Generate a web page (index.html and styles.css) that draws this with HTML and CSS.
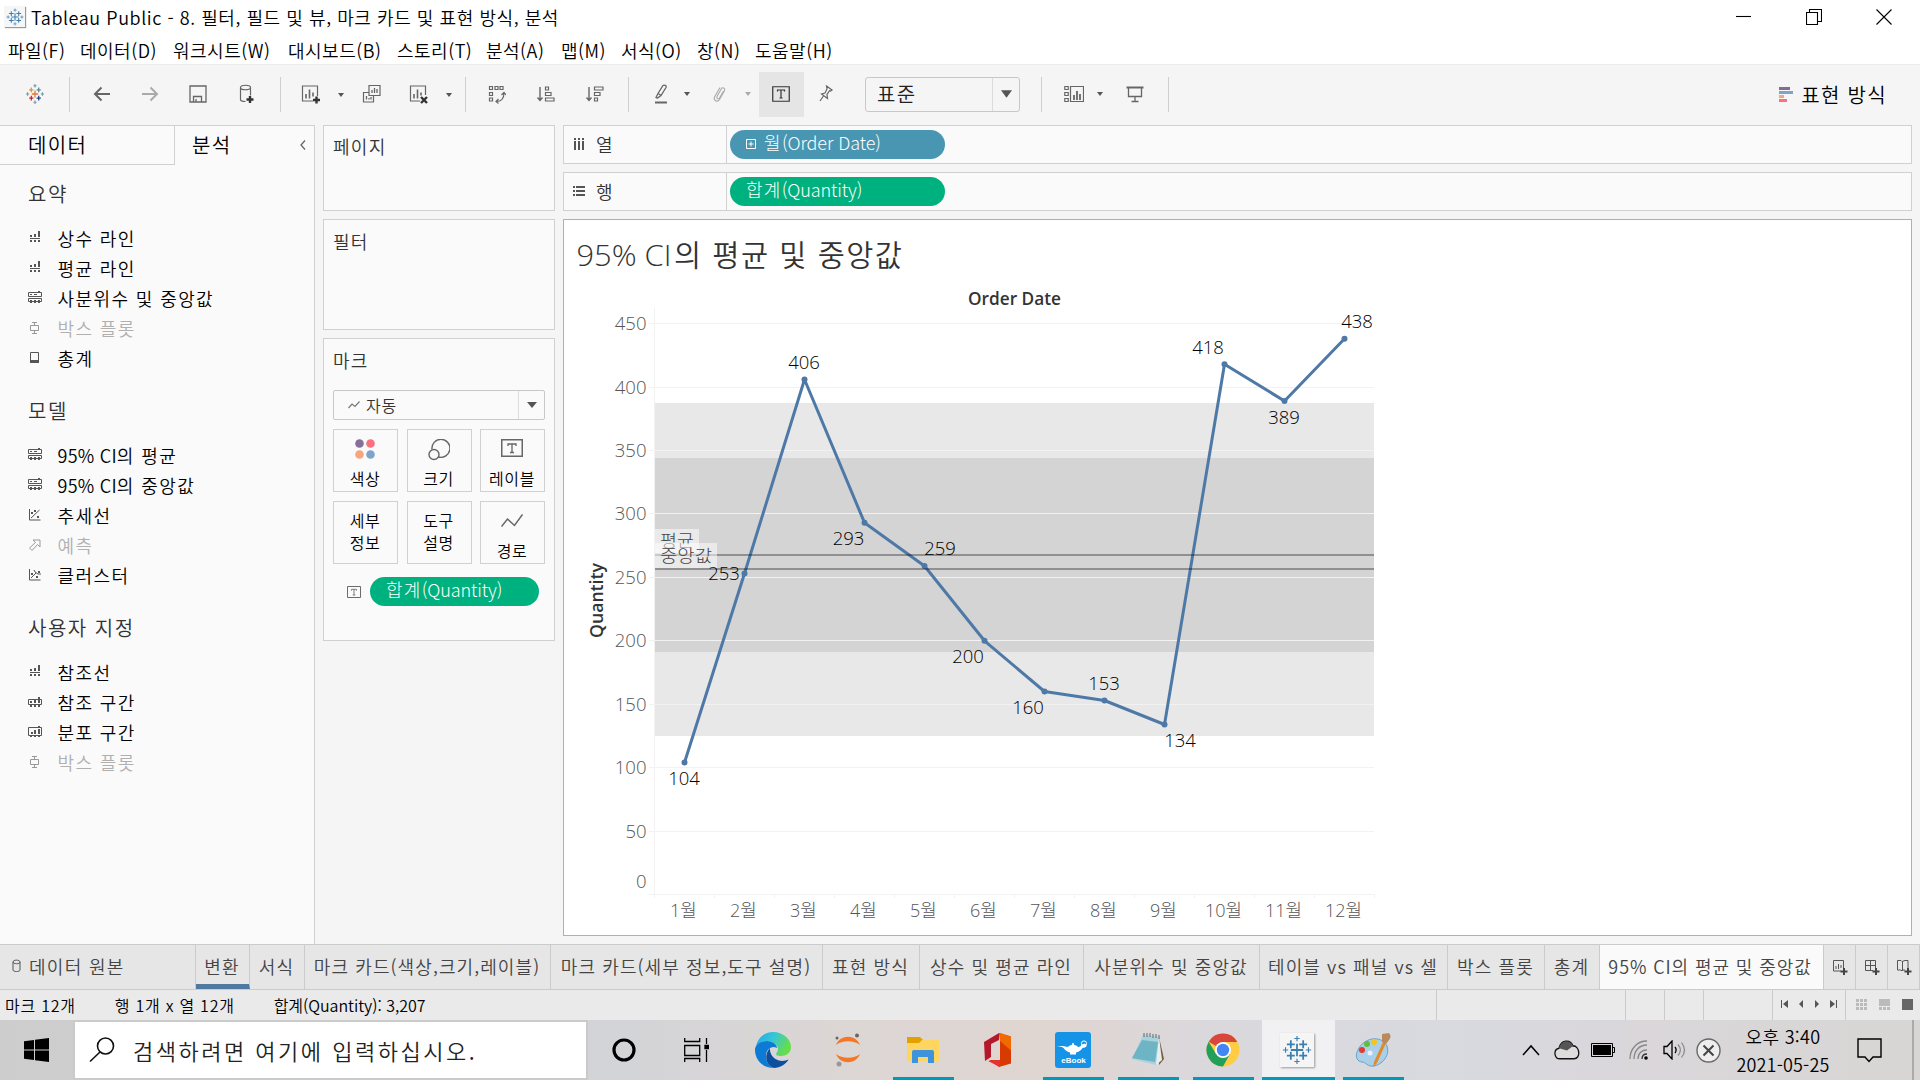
FILE: index.html
```html
<!DOCTYPE html>
<html lang="ko">
<head>
<meta charset="utf-8">
<title>Tableau Public - 8. 필터, 필드 및 뷰, 마크 카드 및 표현 방식, 분석</title>
<link rel="stylesheet" href="styles.css">
</head>
<body>
<svg class="defs" width="0" height="0">
  <symbol id="tab-mark" viewBox="0 0 34 34"><path d="M17 10v14M10 17h14M10 6v9M5.5 10.500h9M24 6v9M19.500 10.500h9M10 19v9M5.500 23.500h9M24 19v9M19.500 23.500h9" stroke-width="2"/><path d="M17 1v6M14 4h6M17 27v6M14 30h6M4 14v6M1 17h6M30 14v6M27 17h6" stroke-width="1.300"/></symbol>
  <symbol id="caret" viewBox="0 0 6 4"><path d="M0 0h6L3 4z"/></symbol>
  <symbol id="i-line" viewBox="0 0 14 14"><path d="M2 4h2v2H2zM6 3h2v3H6zM10 0h2v6h-2zM2 7h10v1H2zM2 9h2v2H2zM6 9h2v2H6zM10 9h2v2h-2z"/></symbol>
  <symbol id="i-quart" viewBox="0 0 14 14"><path d="M.5 5.500v-4h13v4zM.5 10.500v-3h13v3z" fill="none" stroke="currentColor"/><path d="M2 3h2v1H2zM6 3h3v1H6zM10 0h2v2h-2zM2 9h2v3H2zM6 9h2v3H6zM10 9h2v3h-2z"/></symbol>
  <symbol id="i-box" viewBox="0 0 14 14"><path d="M4 1.500h5M6.500 1.500v3M2.500 4.500h8v5h-8zM6.500 9.500v3M4 12.500h5" fill="none" stroke="currentColor"/></symbol>
  <symbol id="i-total" viewBox="0 0 14 14"><path d="M2.500 1.500h8v10h-8z" fill="none" stroke="currentColor"/><path d="M2 9h9v3H2z"/></symbol>
  <symbol id="i-trend" viewBox="0 0 14 14"><path d="M1.500 1v11h11M3 10l8.500-8" fill="none" stroke="currentColor"/><path d="M3 4h2v2H3zM6 2h2v2H6zM9 8h2v2H9z"/></symbol>
  <symbol id="i-cluster" viewBox="0 0 14 14"><path d="M1.500 1v11h11M3 10l5-5M6 2l1 2 3 2h3" fill="none" stroke="currentColor"/><path d="M3 5h2v2H3zM10 3h2v2h-2zM8 8h2v2H8z"/></symbol>
  <symbol id="i-fore" viewBox="0 0 14 14"><path d="M5 2h7v7l-2.500-2.500-5.500 6L1.500 10l6-5.500z" fill="none" stroke="currentColor"/></symbol>
  <symbol id="i-band" viewBox="0 0 14 14"><path d="M.5 4.500h13v5H.5z" fill="none" stroke="currentColor"/><path d="M2 6h2v2H2zM6 5h2v3H6zM10 2h2v6h-2zM2 9h2v3H2zM6 9h2v3H6zM10 9h2v3h-2z"/></symbol>
  <symbol id="i-dist" viewBox="0 0 14 14"><path d="M.5 2.500h13v8H.5z" fill="none" stroke="currentColor"/><path d="M3 7h2v2H3zM6 5h2v4H6zM10 4h2v5h-2zM10 1h2v2h-2zM2 10h2v2H2zM6 10h2v2H6zM10 10h2v2h-2z"/></symbol>
  <symbol id="i-text" viewBox="0 0 22 18"><path d="M.75.75h20.500v16.500H.75z" fill="none" stroke="currentColor" stroke-width="1.500"/><path d="M7 7V5h8v2M11 5v8.500M9 13.500h4" fill="none" stroke="currentColor" stroke-width="1.300"/></symbol>
</svg>

<header class="titlebar">
  <span class="app-icon"><svg width="18" height="18" stroke="#3b7fb0"><use href="#tab-mark"/></svg></span>
  <span class="title">Tableau Public - 8. 필터, 필드 및 뷰, 마크 카드 및 표현 방식, 분석</span>
  <div class="win">
    <svg width="16" height="16" viewBox="0 0 16 16"><path d="M0 7.500h15"/></svg>
    <svg width="16" height="16" viewBox="0 0 16 16"><path d="M.5 3.500h11v12H.5zM3.500 3V.5h12v12H12"/></svg>
    <svg width="16" height="16" viewBox="0 0 16 16"><path d="M.5.5l15 15M15.500.5l-15 15"/></svg>
  </div>
</header>
<nav class="menu"><span>파일(F)</span><span>데이터(D)</span><span>워크시트(W)</span><span>대시보드(B)</span><span>스토리(T)</span><span>분석(A)</span><span>맵(M)</span><span>서식(O)</span><span>창(N)</span><span>도움말(H)</span></nav>

<div class="toolbar">
  <div class="group g-logo"><svg width="18" height="20" viewBox="0 0 34 34" fill="none" stroke-width="2.400" preserveAspectRatio="none"><path d="M17 11v12M11 17h12" stroke="#e8762d"/><path d="M10 6v8M6 10h8" stroke="#e8912d"/><path d="M24 6v8M20 10h8" stroke="#5b879b"/><path d="M10 20v8M6 24h8" stroke="#c72035"/><path d="M24 20v8M20 24h8" stroke="#1f447e"/><path d="M17 0v6M14 3h6M17 28v6M14 31h6M3 14v6M0 17h6M31 14v6M28 17h6" stroke="#7099a6" stroke-width="2"/></svg></div>
  <div class="group g-hist">
    <svg width="18" height="16" viewBox="0 0 18 16"><path d="M17 8H2M8.500 1.500L2 8l6.500 6.500" stroke-width="2"/></svg>
    <svg class="dim" width="18" height="16" viewBox="0 0 18 16"><path d="M1 8h15M9.500 1.500L16 8l-6.500 6.500" stroke-width="2"/></svg>
    <svg width="18" height="18" viewBox="0 0 18 18"><path d="M1 1h16v16H1zM4.500 17v-5.500h8V17M7 17v-3" stroke-width="1.300"/></svg>
    <svg width="18" height="20" viewBox="0 0 18 20"><path d="M3.500 3.500v12c0 1.500 2 2 5 2M3.500 3.500c0-3 10-3 10 0s-10 3-10 0M13.500 3.500v8" stroke-width="1.200"/><path d="M13 12v7M9.500 15.500h7" class="bold"/></svg>
  </div>
  <div class="group g-sheet">
    <svg width="20" height="20" viewBox="0 0 20 20"><path d="M12 17H1.500V2h15v10" stroke-width="1.200"/><path d="M5 10v4.500M8.500 5.500v9M12 8.500v4" stroke-width="1.600"/><path d="M15.500 12.500v7M12 16h7" class="bold"/></svg><svg class="car" width="6" height="4"><use href="#caret"/></svg>
    <svg width="20" height="20" viewBox="0 0 20 20"><path d="M7 1.500h11v10H7zM7 8.500H1.500V18h10v-6" stroke-width="1.200"/><path d="M10 6v3M12.500 4v5M15 5v4M4.500 12v3.500M7 14v1.500M9 13v2.500" stroke-width="1.300"/></svg>
    <svg width="20" height="20" viewBox="0 0 20 20"><path d="M11 17H1.500V2h15v9" stroke-width="1.200"/><path d="M5 10v4.500M8.500 5.500v9M12 8.500v3" stroke-width="1.600"/><path d="M12 13l6 6M18 13l-6 6" class="bold"/></svg><svg class="car" width="6" height="4"><use href="#caret"/></svg>
  </div>
  <div class="group g-sort">
    <svg width="18" height="20" viewBox="0 0 18 20"><path d="M1.500 2.500h3v3h-3zM7 2.500h3v3H7zM12 2.500h3v3h-3zM1.500 8.500h3v3h-3zM1.500 14h3v3h-3zM8.500 17.500c5 0 7.500-3.500 7.500-8.500M13.500 11l2.500-2.500 2 2.500M10.500 15l-2.500 2.500 2.500 2" stroke-width="1.200"/></svg>
    <svg width="18" height="18" viewBox="0 0 18 18"><path d="M3 2v13M.5 12.500L3 15.500l2.500-3" stroke-width="1.400"/><path d="M8.500 2h3v3h-3zM8.500 7.500h5.500v3H8.500zM8.500 13h8.500v3H8.500z" stroke-width="1.200"/></svg>
    <svg width="18" height="18" viewBox="0 0 18 18"><path d="M3 2v13M.5 12.500L3 15.500l2.500-3" stroke-width="1.400"/><path d="M8.500 2H17v3H8.500zM8.500 7.500H14v3H8.500zM8.500 13h3v3h-3z" stroke-width="1.200"/></svg>
  </div>
  <div class="group g-fmt">
    <svg width="20" height="20" viewBox="0 0 20 20"><path d="M5 14l-1-.5 2-4 5-8c1-1 4 0 3 2l-5 8-3.500 2.500zM6 9.500l3.500 2" stroke-width="1.300"/><path d="M3 18.500h12" stroke-width="2"/></svg><svg class="car" width="6" height="4"><use href="#caret"/></svg>
    <svg class="dim clip" width="18" height="20" viewBox="0 0 18 20"><path d="M13.500 7l-4 7c-1 1.500-3.500.5-2.500-1.500l4.500-8c1-1.500 4-.5 3 2l-5 9c-1.500 3-6.500 1.500-5-2.500l5.500-9.500" stroke-width="1.100"/></svg><svg class="car dimf" width="6" height="4"><use href="#caret"/></svg>
    <span class="on"><svg width="18" height="16" viewBox="0 0 18 16"><path d="M.75.75h16.500v14.500H.75zM5.500 5.500V4h7v1.500M9 4v8M7.500 12h3" stroke-width="1.200"/></svg></span>
    <svg class="pin" width="16" height="18" viewBox="0 0 16 18"><path d="M8.500 1l5.500 4-1.500 1-1-.3L9 9.500l.5 4-6-4.500 3.500-1L9 4zM5.500 11L2 16" stroke-width="1.200"/></svg>
    <div class="fit"><span>표준</span><i><svg width="11" height="8"><use href="#caret"/></svg></i></div>
  </div>
  <div class="group g-show">
    <svg width="20" height="18" viewBox="0 0 20 18"><path d="M6.500 1.500h13v15h-13zM.8 1.500h3.400v3H.8zM.8 7.500h3.400v3H.8zM.8 13.500h3.400v3H.8z" stroke-width="1.200"/><path d="M10 10v5M13 6v9M16 9v6" stroke-width="1.800"/></svg><svg class="car" width="6" height="4"><use href="#caret"/></svg>
    <svg width="18" height="18" viewBox="0 0 18 18"><path d="M.5 2.500h17" stroke-width="2"/><path d="M2.500 3v8.500h13V3M9 11.500v5M5.500 16.500h7" stroke-width="1.300"/></svg>
  </div>
  <div class="showme"><svg width="14" height="15"><path d="M0 0h11v3H0z" fill="#886a94"/><path d="M0 4h14v3H0z" fill="#7fa3cb"/><path d="M0 8h5v3H0z" fill="#f4a67c"/><path d="M0 12h8v3H0z" fill="#f8717f"/></svg><span>표현 방식</span></div>
</div>

<main class="work">
  <aside class="side">
    <div class="side-tabs"><div class="data">데이터</div><div class="ana"><span>분석</span><svg width="6" height="10" viewBox="0 0 6 10"><path d="M5 .5L1 5l4 4.500" fill="none" stroke="#666" stroke-width="1.300"/></svg></div></div>
    <h3>요약</h3>
    <ul>
      <li><svg><use href="#i-line"/></svg>상수 라인</li>
      <li><svg><use href="#i-line"/></svg>평균 라인</li>
      <li><svg><use href="#i-quart"/></svg>사분위수 및 중앙값</li>
      <li class="off"><svg><use href="#i-box"/></svg>박스 플롯</li>
      <li><svg><use href="#i-total"/></svg>총계</li>
    </ul>
    <h3>모델</h3>
    <ul>
      <li><svg><use href="#i-quart"/></svg><span><b>95% CI</b>의 평균</span></li>
      <li><svg><use href="#i-quart"/></svg><span><b>95% CI</b>의 중앙값</span></li>
      <li><svg><use href="#i-trend"/></svg>추세선</li>
      <li class="off"><svg><use href="#i-fore"/></svg>예측</li>
      <li><svg><use href="#i-cluster"/></svg>클러스터</li>
    </ul>
    <h3>사용자 지정</h3>
    <ul>
      <li><svg><use href="#i-line"/></svg>참조선</li>
      <li><svg><use href="#i-band"/></svg>참조 구간</li>
      <li><svg><use href="#i-dist"/></svg>분포 구간</li>
      <li class="off"><svg><use href="#i-box"/></svg>박스 플롯</li>
    </ul>
  </aside>

  <section class="cards">
    <div class="card pages">페이지</div>
    <div class="card filters">필터</div>
    <div class="card marks">
      <div>마크</div>
      <div class="type"><svg width="12" height="8" viewBox="0 0 12 8"><path d="M.5 7L4 3l3 2.500L11.500.5" fill="none" stroke="#777" stroke-width="1.200"/></svg><span>자동</span><i><svg width="10" height="6" viewBox="0 0 6 4" preserveAspectRatio="none"><path d="M0 0h6L3 4z"/></svg></i></div>
      <div class="grid">
        <div><svg width="20" height="20"><circle cx="4.500" cy="4.500" r="4.300" fill="#86709a"/><circle cx="15.500" cy="4.500" r="4.300" fill="#f8717f"/><circle cx="4.500" cy="15.500" r="4.300" fill="#f4a67c"/><circle cx="15.500" cy="15.500" r="4.300" fill="#7fa3cb"/></svg><span>색상</span></div>
        <div><svg width="22" height="22"><g fill="none" stroke="#666" stroke-width="1.400"><path d="M4 10.500a9 9 0 1 1 6.500 7.500"/><circle cx="6" cy="15.500" r="5"/></g></svg><span>크기</span></div>
        <div><svg width="22" height="18"><use href="#i-text"/></svg><span>레이블</span></div>
        <div class="two">세부<br>정보</div>
        <div class="two">도구<br>설명</div>
        <div><svg width="22" height="14"><path d="M.5 12.500L6.500 5l7 6.500L21.500.5" fill="none" stroke="#666" stroke-width="1.500"/></svg><span>경로</span></div>
      </div>
      <div class="shelfpill"><svg width="14" height="12" viewBox="0 0 22 18" preserveAspectRatio="none"><use href="#i-text"/></svg><span class="pill green"><span>합계<b>(Quantity)</b></span></span></div>
    </div>
  </section>

  <section class="canvas">
    <div class="shelf"><div class="name"><svg width="12" height="13"><path d="M1 0h2v2H1zM5 0h2v2H5zM9 0h2v2H9zM1 3h2v9H1zM5 3h2v9H5zM9 3h2v9H9z"/></svg><span>열</span></div><span class="pill blue"><svg width="10" height="10"><path d="M.5.5h9v9h-9zM5 2.500v5M2.500 5h5" fill="none" stroke="#fff"/></svg><span>월<b>(Order Date)</b></span></span></div>
    <div class="shelf"><div class="name"><svg width="12" height="11"><path d="M0 0h2v2H0zM3 0h9v2H3zM0 4h2v2H0zM3 4h9v2H3zM0 8h2v2H0zM3 8h9v2H3z"/></svg><span>행</span></div><span class="pill green"><span>합계<b>(Quantity)</b></span></span></div>
    <div class="view">
      <svg class="chart" width="1347" height="715" viewBox="564 220 1347 715">
        <g class="ttl"><text x="576.500" y="265.500" textLength="95" lengthAdjust="spacingAndGlyphs">95% CI</text><text class="ko" x="674" y="265.500" textLength="228">의 평균 및 중앙값</text></g>
        <text class="hd" x="968" y="304.500" textLength="93" lengthAdjust="spacingAndGlyphs">Order Date</text>
        <text class="hd" transform="translate(602.500 638) rotate(-90)" textLength="75" lengthAdjust="spacingAndGlyphs">Quantity</text>
        <path class="band1" d="M655 403h719v333H655z"/><path class="band2" d="M655 458h719v194H655z"/>
        <path class="gl" d="M649 323.500h725M649 387.500h725M649 450.500h725M649 513.500h725M649 577.500h725M649 640.500h725M649 704.500h725M649 767.500h725M649 831.500h725M649 894.500h725M654.500 308v590M714.500 894v4M774.500 894v4M834.500 894v4M894.500 894v4M954.500 894v4M1014.500 894v4M1074.500 894v4M1134.500 894v4M1194.500 894v4M1254.500 894v4M1314.500 894v4M1374.500 894v4"/>
        <path class="ln" d="M684.500 762.500l60-189 60-194 60 143.200 60 43.300 60 74.800 60 50.700 60 9 60 24 60-360.200 60 36.700 60-62.200"/>
        <g fill="#4e79a7"><circle cx="684.500" cy="762.500" r="3"/><circle cx="744.500" cy="573.500" r="3"/><circle cx="804.500" cy="379.500" r="3"/><circle cx="864.500" cy="522.700" r="3"/><circle cx="924.500" cy="566" r="3"/><circle cx="984.500" cy="640.800" r="3"/><circle cx="1044.500" cy="691.500" r="3"/><circle cx="1104.500" cy="700.500" r="3"/><circle cx="1164.500" cy="724.500" r="3"/><circle cx="1224.500" cy="364.300" r="3"/><circle cx="1284.500" cy="401" r="3"/><circle cx="1344.500" cy="338.800" r="3"/></g>
        <path class="ref" d="M655 555h719M655 569h719"/>
        <path class="tag" d="M655 529h44v24h-44z"/><text class="rf" x="660" y="546.500" textLength="34" lengthAdjust="spacingAndGlyphs">평균</text>
        <path class="tag" d="M655 543h62v25h-62z"/><text class="rf" x="660" y="561.500" textLength="52" lengthAdjust="spacingAndGlyphs">중앙값</text>
        <g class="ax yax"><text x="646.500" y="330">450</text><text x="646.500" y="393.500">400</text><text x="646.500" y="457">350</text><text x="646.500" y="520">300</text><text x="646.500" y="583.500">250</text><text x="646.500" y="647">200</text><text x="646.500" y="710.500">150</text><text x="646.500" y="774">100</text><text x="646.500" y="837.500">50</text><text x="646.500" y="888">0</text></g>
        <g class="ax xax"><text x="683.500" y="917">1월</text><text x="743.500" y="917">2월</text><text x="803.500" y="917">3월</text><text x="863.500" y="917">4월</text><text x="923.500" y="917">5월</text><text x="983.500" y="917">6월</text><text x="1043.500" y="917">7월</text><text x="1103.500" y="917">8월</text><text x="1163.500" y="917">9월</text><text x="1223.500" y="917">10월</text><text x="1283.500" y="917">11월</text><text x="1343.500" y="917">12월</text></g>
        <g class="lab"><text x="684" y="785">104</text><text x="724" y="580">253</text><text x="804" y="369">406</text><text x="848.500" y="545">293</text><text x="940" y="555">259</text><text x="968" y="663">200</text><text x="1028" y="714">160</text><text x="1104" y="690">153</text><text x="1180" y="747">134</text><text x="1208" y="354">418</text><text x="1284" y="424">389</text><text x="1357" y="328">438</text></g>
      </svg>
    </div>
  </section>
</main>

<div class="tabs">
  <div class="src"><svg width="9" height="14" viewBox="0 0 9 14"><path d="M1 3v8c0 2 7 2 7 0V3M1 3c0-2.500 7-2.500 7 0s-7 2-7 0" fill="none" stroke="#555"/></svg>데이터 원본</div>
  <div class="first">변환</div><div>서식</div><div>마크 카드(색상,크기,레이블)</div><div>마크 카드(세부 정보,도구 설명)</div><div>표현 방식</div><div>상수 및 평균 라인</div><div>사분위수 및 중앙값</div><div>테이블 vs 패널 vs 셀</div><div>박스 플롯</div><div>총계</div><div class="cur">95% CI의 평균 및 중앙값</div>
  <div class="add"><svg width="16" height="16" viewBox="0 0 16 16"><path d="M9 12H1.500V1.500h10V9M4 7v3M6.500 5v5M9 6v3" class="th"/><path d="M12 9v7M8.500 12.500h7" class="pl"/></svg></div>
  <div class="add"><svg width="16" height="16" viewBox="0 0 16 16"><path d="M9 11.500H1.500v-10h10V9M1.500 6.500h10M6.500 1.500v10" class="th"/><path d="M12 9v7M8.500 12.500h7" class="pl"/></svg></div>
  <div class="add"><svg width="16" height="16" viewBox="0 0 16 16"><path d="M9 11H7l-1 1-1-1H1.500V1.500H5l1 1 3-1h3V9M6.500 2v10" class="th"/><path d="M12 9v7M8.500 12.500h7" class="pl"/></svg></div>
</div>
<div class="status">
  <div class="info"><span>마크 12개</span><span>행 1개 x 열 12개</span><span class="sum">합계(Quantity): 3,207</span></div>
  <div></div><div></div><div></div><div></div>
  <div class="nav"><svg width="8" height="8"><path d="M0 0h1v8H0zM7 0v8L2 4z"/></svg><svg width="8" height="8"><path d="M6 0v8L2 4z"/></svg><svg width="8" height="8"><path d="M2 0v8l4-4z"/></svg><svg width="8" height="8"><path d="M7 0h1v8H7zM1 0v8l5-4z"/></svg></div>
  <div class="modes"><svg width="11" height="11" fill="#bbb"><path d="M0 0h3v3H0zM4 0h3v3H4zM8 0h3v3H8zM0 4h3v3H0zM4 4h3v3H4zM8 4h3v3H8zM0 8h3v3H0zM4 8h3v3H4zM8 8h3v3H8z"/></svg><svg width="11" height="11" fill="#bbb"><path d="M0 0h11v7H0zM0 8h3v3H0zM4 8h3v3H4zM8 8h3v3H8z"/></svg><svg width="11" height="11" fill="#666"><path d="M0 0h11v11H0z"/></svg></div>
</div>

<footer class="taskbar">
  <div class="start"><svg width="25" height="24" viewBox="0 0 25 24"><path d="M0 3.300l10-1.400v9.600H0zM11 1.800L25 0v11.500H11zM0 12.500h10v9.600L0 20.700zM11 12.500h14V24l-14-1.800z"/></svg></div>
  <div class="search"><svg width="26" height="26" viewBox="0 0 26 26"><circle cx="16.500" cy="9" r="8" fill="none" stroke="#111" stroke-width="1.600"/><path d="M11 15L1 24.500" stroke="#111" stroke-width="1.600"/></svg><span>검색하려면 여기에 입력하십시오.</span></div>
  <div class="apps">
    <div><svg width="24" height="24"><circle cx="12" cy="12" r="10" fill="none" stroke="#000" stroke-width="3.200"/></svg></div>
    <div class="tv"><svg width="25" height="24" fill="none" stroke="#000" stroke-width="1.300"><path d="M.7 0v3.500h15V0M.7 7.500h15v10H.7zM.7 24v-3.500h15V24M22.500 0v6M22.500 12v12"/><path d="M21 7.500h3.500v3H21z" fill="#000"/></svg></div>
    <div><svg width="36" height="36" viewBox="0 0 36 36"><defs><linearGradient id="eg" x1="0" y1="0" x2="1" y2=".4"><stop offset="0" stop-color="#22a5e6"/><stop offset=".5" stop-color="#36c6d8"/><stop offset="1" stop-color="#66dd4a"/></linearGradient></defs><path d="M1 14C3 5 10 0 18 0c10 0 18 7 18 15 0 6-5 9-10 9-4 0-5-1-5-2 0-1 2-2 2-5 0-5-6-8-11-8C7 9 3 11 1 14z" fill="url(#eg)"/><path d="M0 18C0 12 6 9 12 9c5 0 10 3 10 7-5-3-11 1-11 8 0 6 3 10 8 12C8 36 0 28 0 18z" fill="#0d7bd4"/><path d="M15 16c-6 6-5 17 4 20 6 0 12-4 14.500-8.500-4 2-9 2-13-.5s-6-7-5.500-11z" fill="#0c4f9e"/></svg></div>
    <div><svg width="28" height="34" viewBox="0 0 28 34"><path d="M2 12C6 1 22 1 26 12 20 7 8 7 2 12zM2 21c4 11 20 11 24 0-6 5-18 5-24 0z" fill="#f37726"/><circle cx="23" cy="2.500" r="2" fill="#666"/><circle cx="3" cy="5" r="1.500" fill="#666"/><circle cx="5" cy="31" r="2.500" fill="#999"/></svg></div>
    <div class="run"><svg width="34" height="28" viewBox="0 0 34 28"><path d="M1 1h13l3 3v4H1z" fill="#e2a100"/><path d="M1 7h12l3-3h17v21H1z" fill="#ffd562"/><path d="M6 27V16q0-2 2-2h18q2 0 2 2v11h-6v-6H12v6z" fill="#3d93dc"/></svg></div>
    <div><svg width="28" height="34" viewBox="0 0 28 34"><path d="M0 9l15-9v7l-8 4v13l-6 4z" fill="#b5182d"/><path d="M15 0l12 3.500v27L15 34l-10-7h11V7z" fill="#d83b01"/><path d="M16 0l11 3.500v14L16 8z" fill="#f06a00"/><path d="M4 28l12-1v7z" fill="#e8303a"/></svg></div>
    <div class="run"><svg width="36" height="36" viewBox="0 0 36 36"><rect width="36" height="36" rx="3" fill="#1593e6"/><path d="M1 14h6c3 0 4 1 6 1 1-1.500 3-2 4.200-2.300V11h1.600v1.700c1.200.3 3.200.8 4.200 2.300 2 0 3-1.500 4-2.500 1.500-1.500 4.500-1 4.500 1 0 2-2 2-4 2.500-1.500 2.500-4 4-6.500 4.500v2h-6v-2c-3-.5-5-2.500-6.500-4.500-1-1.500-4-1.500-7.500-2z" fill="#fff"/><circle cx="29" cy="11.500" r="2.600" fill="none" stroke="#fff"/><text x="18.500" y="31" text-anchor="middle" class="eb">eBook</text></svg></div>
    <div class="run"><svg width="34" height="34" viewBox="0 0 34 34"><path d="M28 4l5 22-5 6z" fill="#7d5c36"/><path d="M12 2l17 2-4 28L1 26z" fill="#a8d3dc"/><path d="M11 7l16 2-3 20L1 25z" fill="#6db5c4"/><path d="M28 4l3 23-6 5z" fill="#e5eef0"/><path d="M13 0v4M16 0v4M19 0v4M22 1v4M25 1v4M28 2v4" stroke="#666"/></svg></div>
    <div class="run"><svg width="34" height="34" viewBox="0 0 34 34"><circle cx="17" cy="17" r="16.500" fill="#fc4"/><path d="M17 17L2.700 8.700A16.500 16.500 0 0 1 31.300 8.700L31 9H17z" fill="#d9463b"/><path d="M2.700 8.700A16.500 16.500 0 0 0 17 33.500L24 21 17 17l-7 4z" fill="#22a05a"/><circle cx="17" cy="17" r="8" fill="#fff"/><circle cx="17" cy="17" r="6.200" fill="#4285f4"/></svg></div>
    <div class="run cur"><span class="tile"><svg width="30" height="30" stroke="#3a7fb0"><use href="#tab-mark"/></svg></span></div>
    <div class="run"><svg width="36" height="34" viewBox="0 0 36 34"><path d="M3 17C8 5 26 1 32 13c3 8-3 18-13 20-7 1-8-4-12-4S-1 24 3 17z" fill="#a9d0ea" stroke="#6f9fc4"/><circle cx="7" cy="17" r="3" fill="#e23b2e"/><circle cx="12" cy="11" r="3" fill="#5fbf3a"/><circle cx="19" cy="9" r="3" fill="#f5c518"/><circle cx="15" cy="20" r="2.500" fill="#eef"/><path d="M28 9l3 1-9 20-4 4 1-5z" fill="#e08a2c"/><path d="M27 1l7-1c2 2 2 5 0 7l-3 4-4-2z" fill="#b98a5c"/></svg></div>
  </div>
  <div class="tray">
    <svg width="18" height="12" viewBox="0 0 18 12"><path d="M1 11l8-9 8 9" fill="none" stroke="#000" stroke-width="1.500"/></svg>
    <svg width="26" height="20" viewBox="0 0 26 17" preserveAspectRatio="none"><path d="M6 16c-6 0-7-8-1-9C7 0 16-1 19 5c7 0 8 11 1 11z" fill="#ddd" stroke="#111" stroke-width="1.300"/><path d="M5 7C7 0 16-1 19 5l-6 4z" fill="#555"/></svg>
    <svg width="24" height="16" viewBox="0 0 24 16"><path d="M.5 1.500h21v13H.5zM22 5.500h1.500v5H22" fill="none" stroke="#000"/><path d="M2 3h18v10H2z"/></svg>
    <svg width="20" height="20" viewBox="0 0 20 20" fill="none"><path d="M1 19C1 9 8 1 18 1M5 19C5 11 10 5 18 5M9 19c0-6 4-9 9-9" stroke="#888" stroke-width="1.300"/><path d="M13 19c0-3 2-5 5-5" stroke="#333" stroke-width="1.300"/><circle cx="17" cy="18" r="1.800" fill="#000"/></svg>
    <svg width="24" height="20" viewBox="0 0 24 20" fill="none"><path d="M1 6.500h3L9 1v18l-5-5.500H1z" stroke="#000" stroke-width="1.300"/><path d="M12 7c1.500 2 1.500 4 0 6" stroke="#000" stroke-width="1.300"/><path d="M15 4.500c3 3.500 3 7.500 0 11M18.500 2.500c4 5 4 10 0 15" stroke="#888" stroke-width="1.200"/></svg>
    <svg width="25" height="25" viewBox="0 0 25 25" fill="none"><circle cx="12.500" cy="12.500" r="11.500" fill="#eee" stroke="#666" stroke-width="1.400"/><path d="M7.500 7.500l10 10M17.500 7.500l-10 10" stroke="#444" stroke-width="2"/></svg>
    <div class="clock"><span>오후 3:40</span><span class="date">2021-05-25</span></div>
    <svg width="25" height="25" viewBox="0 0 25 25"><path d="M1 1h23v18h-8l-4 4.500L8 19H1z" fill="none" stroke="#000" stroke-width="1.400"/></svg>
  </div>
  <div class="peek"></div>
</footer>
</body>
</html>
```
FILE: styles.css
```css
* { box-sizing: border-box; }
body { margin: 0; width: 1920px; height: 1080px; overflow: hidden; display: flex; flex-direction: column; background: #f5f5f5; color: #000; font-family: "Noto Sans CJK KR", sans-serif; font-size: 18px; font-weight: 350; letter-spacing: 1.3px; line-height: 1; }
svg { display: block; flex: none; }
b { font-weight: inherit; }
.defs { position: absolute; }

.titlebar { height: 33px; background: #fff; display: flex; align-items: center; padding-left: 4px; }
.app-icon { width: 21px; height: 21px; display: grid; place-items: center; background: #f6f6f6; box-shadow: 1px 1px 1px #999; }
.title { margin-left: 6px; flex: 1; letter-spacing: .56px; }
.win { display: flex; gap: 54px; padding-right: 28px; }
.win svg { fill: none; stroke: #000; stroke-width: 1.1; }

.menu { height: 31px; background: #fff; padding: 2px 0 0 8px; letter-spacing: .5px; display: grid; grid-template-columns: 72px 93px 115px 109px 89px 75px 60px 76px 58px 90px; align-items: center; white-space: nowrap; }

.toolbar { height: 61px; border-top: 1px solid #ececec; padding-bottom: 2px; display: flex; align-items: center; }
.toolbar svg { fill: none; stroke: #666; }
.toolbar svg.car { fill: #555; stroke: none; }
.toolbar svg.dimf { fill: #aaa; }
.toolbar svg.dim { stroke: #aaa; }
.toolbar .bold { stroke: #333; stroke-width: 2.4; }
.group { display: flex; align-items: center; height: 35px; border-right: 1px solid #cfcfcf; }
.g-logo { width: 70px; justify-content: center; }
.g-hist { width: 211px; gap: 30px; padding-left: 23px; }
.g-sheet { width: 185px; padding-left: 20px; }
.g-sheet .car { margin: 1px 18px 0 17px; }
.g-sheet svg:nth-child(4) { margin-left: 27px; }
.g-sort { width: 163px; padding-left: 22px; gap: 31px; }
.g-fmt { width: 413px; padding-left: 23px; }
.g-fmt .car { margin: 0 0 0 12px; }
.clip { margin-left: 20px; }
.g-fmt .dimf { margin-left: 17px; }
.on { width: 45px; height: 45px; background: #e5e5e5; margin-left: 8px; padding-right: 2px; display: grid; place-items: center; }
.toolbar .on svg { stroke: #333; }
.pin { margin-left: 14px; }
.fit { margin-left: 31px; width: 155px; height: 35px; border: 1px solid #c8c8c8; border-radius: 3px; display: flex; align-items: center; font-size: 20px; color: #222; }
.fit span { flex: 1; padding-left: 11px; }
.fit i { width: 27px; height: 100%; border-left: 1px solid #dcdcdc; display: grid; place-items: center; }
.toolbar .fit svg { fill: #555; stroke: none; }
.g-show { width: 127px; padding-left: 22px; }
.g-show .car { margin: 0 23px 0 13px; }
.showme { margin-left: auto; padding-right: 33px; display: flex; align-items: center; gap: 8px; font-size: 20px; }
.showme span { padding-top: 1px; }
.toolbar .showme svg { stroke: none; margin-left: -1px; }

.work { height: 819px; display: flex; }
.side { width: 315px; border: 1px solid #d0d0d0; border-width: 1px 1px 0 0; background: #fafafa; }
.side-tabs { display: flex; height: 39px; font-size: 20px; }
.data { width: 175px; border: 1px solid #d0d0d0; border-width: 0 1px 1px 0; padding: 9px 0 0 28px; }
.ana { flex: 1; display: flex; justify-content: space-between; align-items: center; padding: 0 8px 2px 17px; }
.side h3 { margin: 19px 0 0 28px; font-size: 20px; font-weight: inherit; height: 41px; color: #333; line-height: 20px; letter-spacing: 1.5px; }
.side ul + h3 { margin-top: 28px; }
.side ul { margin: 0; padding: 0; list-style: none; }
.side h3 ~ ul { margin-top: -2px; }
.side li { height: 30px; display: flex; align-items: center; padding: 0 0 1px 28px; letter-spacing: 1.4px; }
.side li svg { width: 14px; height: 14px; margin: 0 15.500px 0 0; fill: #555; color: #555; }
.side li b { letter-spacing: .25px; }
.side li.off { color: #b0b0b0; }
.side li.off svg { color: #999; }

.cards { width: 232px; margin-left: 8px; display: flex; flex-direction: column; gap: 8px; }
.card { border: 1px solid #d0d0d0; background: #fafafa; padding: 11px 9px 0; color: #333; line-height: 20px; }
.pages { height: 86px; padding-top: 10px; }
.filters { height: 111px; }
.marks { height: 303px; }
.type { height: 30px; margin-top: 20px; border: 1px solid #c8c8c8; border-radius: 2px; display: flex; align-items: center; font-size: 16px; padding-left: 14px; letter-spacing: .8px; }
.type span { flex: 1; padding-left: 6px; }
.type i { width: 26px; height: 100%; border-left: 1px solid #dcdcdc; display: grid; place-items: center; }
.type i svg { fill: #555; }
.grid { margin-top: 9px; display: grid; grid-template-columns: 65px 65px 65px; grid-auto-rows: 64px; gap: 8px; column-gap: 8.500px; font-size: 16px; letter-spacing: .6px; color: #000; }
.grid > div { border: 1px solid #d0d0d0; height: 63px; display: flex; flex-direction: column; align-items: center; justify-content: space-between; padding: 9px 1px 3px 0; line-height: 20px; }
.grid > div:last-child { padding-top: 12px; }
.grid .two { display: block; text-align: center; padding-top: 7px; line-height: 22px; }
.grid svg, .shelfpill > svg { color: #666; }
.shelfpill { display: flex; align-items: center; margin-top: 12px; padding-left: 14px; gap: 9px; }
.shelfpill .pill { width: 169px; padding-left: 16px; margin: 0; }
.pill { width: 215px; height: 29px; border-radius: 15px; color: #fff; display: flex; align-items: center; padding: 0 0 5px 16px; margin: 0 0 0 3px; line-height: 20px; font-weight: 300; }
.pill b { letter-spacing: -.1px; }
.pill svg { margin: 4px 8px 0 0; }
.green { background: #00b180; }
.blue { background: #4996b2; }

.canvas { width: 1349px; margin-left: 8px; }
.shelf { height: 39px; margin-bottom: 8px; border: 1px solid #d0d0d0; background: #fafafa; display: flex; align-items: center; }
.name { width: 163px; height: 37px; border-right: 1px solid #d0d0d0; display: flex; align-items: center; padding-left: 9px; gap: 11px; color: #333; }
.name span { padding-bottom: 2px; }
.name svg { fill: #555; }
.view { height: 717px; border: 1px solid #b0b0b0; background: #fff; }
.chart text { letter-spacing: 0; }
.ttl { font: 300 28.5px "Open Sans", sans-serif; fill: #333; }
.ttl .ko { font: 350 29.5px "Noto Sans CJK KR", sans-serif; fill: #333; }
.hd { font: 600 18.5px "Open Sans", sans-serif; fill: #333; }
.band1 { fill: #e8e8e8; }
.band2 { fill: #d4d4d4; }
.gl { stroke: #f2f2f2; fill: none; }
.ln { stroke: #4e79a7; stroke-width: 3; fill: none; stroke-linejoin: round; }
.ref { stroke: #000; stroke-opacity: .32; stroke-width: 2; }
.tag { fill: #fff; fill-opacity: .5; }
.rf { font: 300 17px "Noto Sans CJK KR", sans-serif; fill: #444; }
.ax { font: 300 18.5px "Open Sans", "Noto Sans CJK KR", sans-serif; fill: #555; }
.yax { text-anchor: end; }
.xax { text-anchor: middle; font-size: 18px; }
.lab { font: 300 18.5px "Open Sans", sans-serif; fill: #000; text-anchor: middle; }

.tabs { height: 46px; border-top: 1px solid #cbcbcb; border-bottom: 1px solid #cbcbcb; background: #e6e6e6; color: #444; display: grid; grid-template-columns: 196px 54px 55px 246px 272px 97px 164px 176px 188px 97px 55px 224px 32px 32px 32px; }
.tabs > div { border-right: 1px solid #cbcbcb; display: flex; align-items: center; justify-content: center; white-space: nowrap; letter-spacing: 1.1px; padding: 0 1px 2px 0; }
.tabs .src { justify-content: flex-start; padding-left: 12px; gap: 8px; letter-spacing: 1.3px; }
.tabs .first { border-bottom: 5px solid #4e79a0; padding-top: 3px; padding-bottom: 0; }
.tabs .cur { background: #fafafa; letter-spacing: .9px; padding-right: 3px; }
.tabs .add { padding: 0; }
.th { fill: none; stroke: #555; }
.pl { stroke: #444; stroke-width: 2; }

.status { height: 30px; background: #eaeaea; display: grid; grid-template-columns: 1437px 189px 39px 39px 69px 73px 74px; font-size: 16px; letter-spacing: .75px; }
.status > div { border-right: 1px solid #cbcbcb; display: flex; align-items: center; }
.info { padding-left: 5px; gap: 39px; }
.sum { letter-spacing: -.05px; }
.status .nav { gap: 8px; justify-content: center; fill: #555; padding-bottom: 2px; }
.status .modes { gap: 12px; justify-content: center; border: 0; padding: 0 0 2px 3px; }

.taskbar { height: 60px; display: flex; background: linear-gradient(90deg, #cdcdcd 0, #d3d4d8 620px, #dcd6d4 850px, #dfd5d1 1050px, #dad8dd 1220px, #d8dae0 1450px, #dad6da 1650px, #d8d6d4 1920px); }
.start { width: 73px; padding-right: 1px; display: grid; place-items: center; }
.search { width: 515px; border: 2px solid #cacaca; background: #fff; display: flex; align-items: center; padding-left: 14px; gap: 18px; font-size: 22px; letter-spacing: 2.5px; color: #222; white-space: nowrap; }
.apps { display: flex; }
.apps > div { width: 61px; margin: 0 7px; border-bottom: 3px solid transparent; padding: 3px 2px 0 0; display: grid; place-items: center; }
.apps > .tv { margin-left: 5px; margin-right: 9px; padding-right: 0; }
.apps > .run { border-color: #0099bc; }
.apps > .cur { width: 73px; margin: 0 1px; padding-right: 3px; background: #f1f1f3; }
.tile { width: 34px; height: 34px; display: grid; place-items: center; background: #f5f5f5; box-shadow: 1px 1px 2px #999; }
.apps > div:first-child { margin-left: 5px; padding-right: 0; }
.eb { font: 700 8px "Liberation Sans", sans-serif; fill: #fff; letter-spacing: 0; }
.tray { margin-left: auto; width: 390px; display: flex; align-items: center; }
.tray > svg { margin-right: 14px; }
.tray > svg:nth-child(2) { margin-right: 11px; }
.tray > svg:nth-child(5) { margin-right: 9px; }
.tray > svg:nth-child(6) { margin: 0; }
.clock { width: 110px; margin: 0 19px 0 7px; display: flex; flex-direction: column; align-items: center; gap: 10px; font-size: 18px; letter-spacing: .3px; white-space: nowrap; }
.date { letter-spacing: .15px; }
.tray > svg:last-child { margin-right: 0; }
.peek { width: 8px; border-left: 2px solid #aaa; }
```
